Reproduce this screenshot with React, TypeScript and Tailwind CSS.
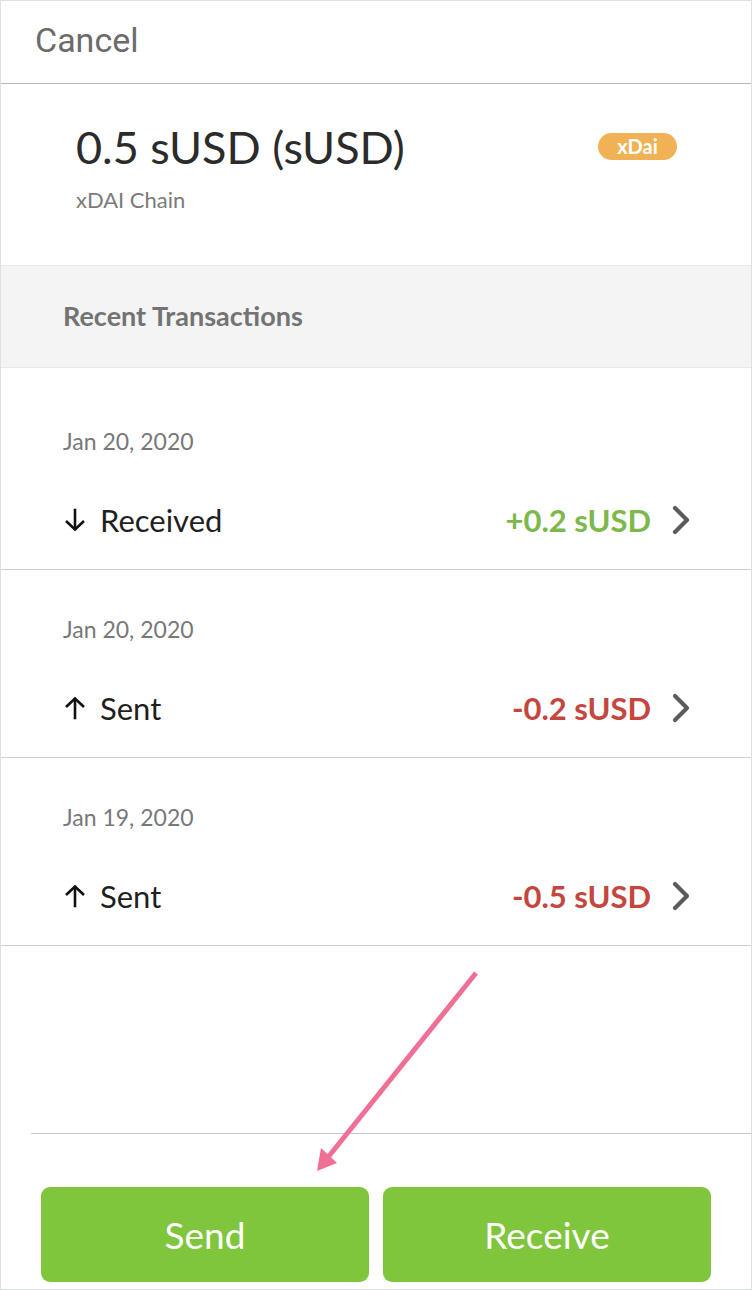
import React from "react";

const sans = { fontFamily: "Lato, 'Noto Sans', sans-serif" };

function ArrowIcon({ up }: { up?: boolean }) {
  return (
    <svg width="24" height="24" viewBox="0 0 24 24" fill="none" stroke="#111" strokeWidth="2.6" strokeLinecap="square" className={up ? "rotate-180" : ""}>
      <path d="M12 2 V21" />
      <path d="M3 13 L12 21.5 L21 13" strokeLinecap="butt" />
    </svg>
  );
}

function Chevron() {
  return (
    <svg width="20" height="30" viewBox="0 0 20 30" fill="none" stroke="#5b5b5b" strokeWidth="4.2" strokeLinecap="round" strokeLinejoin="round">
      <path d="M4 3 L16 15 L4 27" />
    </svg>
  );
}

const txs = [
  { date: "Jan 20, 2020", label: "Received", amount: "+0.2 sUSD", up: false, color: "text-[#7cb84b]" },
  { date: "Jan 20, 2020", label: "Sent", amount: "-0.2 sUSD", up: true, color: "text-[#c4463e]" },
  { date: "Jan 19, 2020", label: "Sent", amount: "-0.5 sUSD", up: true, color: "text-[#c4463e]" },
];

export default function App() {
  return (
    <div className="relative w-[752px] h-[1290px] border border-[#dae2e8] bg-white flex flex-col overflow-hidden" style={sans}>
      <div className="h-[83px] flex items-center pl-[34px] pb-[5px] border-b border-[#b4b8bb]">
        <span className="text-[34px] text-[#6b6b6b] leading-none" style={{ fontFamily: "Roboto, sans-serif" }}>Cancel</span>
      </div>
      <div className="h-[182px] border-b border-[#e6e6e6] flex items-start justify-between pl-[75px] pr-[74px] pt-[36px]">
        <div className="flex flex-col">
          <span className="text-[45px] leading-[54px] text-[#2b2b2b]">0.5 sUSD (sUSD)</span>
          <span className="text-[22px] leading-[30px] text-[#7b7b7b] mt-[11px]">xDAI Chain</span>
        </div>
        <span className="mt-[13px] h-[27px] w-[79px] rounded-full bg-[#f0b255] text-white font-bold text-[20px] leading-[27px] text-center">xDai</span>
      </div>
      <div className="h-[102px] bg-[#f4f4f4] border-b border-[#e8e8e8] flex items-center pl-[62px]">
        <span className="text-[27px] font-bold text-[#737373]">Recent Transactions</span>
      </div>
      <div className="pt-[14px]">
        {txs.map((t, i) => (
          <div key={i} className="h-[188px] border-b border-[#cfcfcf] flex flex-col pl-[62px] pr-[60px]">
            <div className="mt-[45px] h-[28px] flex items-center text-[23px] text-[#787878]">{t.date}</div>
            <div className="mt-[45px] h-[40px] flex items-center">
              <ArrowIcon up={t.up} />
              <span className="ml-[13px] text-[31px] text-[#1f1f1f]">{t.label}</span>
              <span className={`ml-auto text-[31px] font-bold ${t.color}`}>{t.amount}</span>
              <span className="ml-[20px] flex items-center"><Chevron /></span>
            </div>
          </div>
        ))}
      </div>
      <div className="flex-1" />
      <div className="ml-[30px] border-t border-[#c8c8c8]" />
      <div className="mt-[53px] mb-[7px] px-[40px] flex gap-[14px]">
        <button className="w-[328px] h-[95px] rounded-[9px] bg-[#80c63c] text-white text-[37px] font-normal">Send</button>
        <button className="w-[328px] h-[95px] rounded-[9px] bg-[#80c63c] text-white text-[37px] font-normal">Receive</button>
      </div>
      <svg className="absolute left-0 top-0 pointer-events-none" width="752" height="1290" viewBox="0 0 752 1290">
        <line x1="475" y1="972" x2="324" y2="1160" stroke="#ef6f95" strokeWidth="5" />
        <polygon points="316,1170 320,1147 336,1162" fill="#ef6f95" />
      </svg>
    </div>
  );
}
